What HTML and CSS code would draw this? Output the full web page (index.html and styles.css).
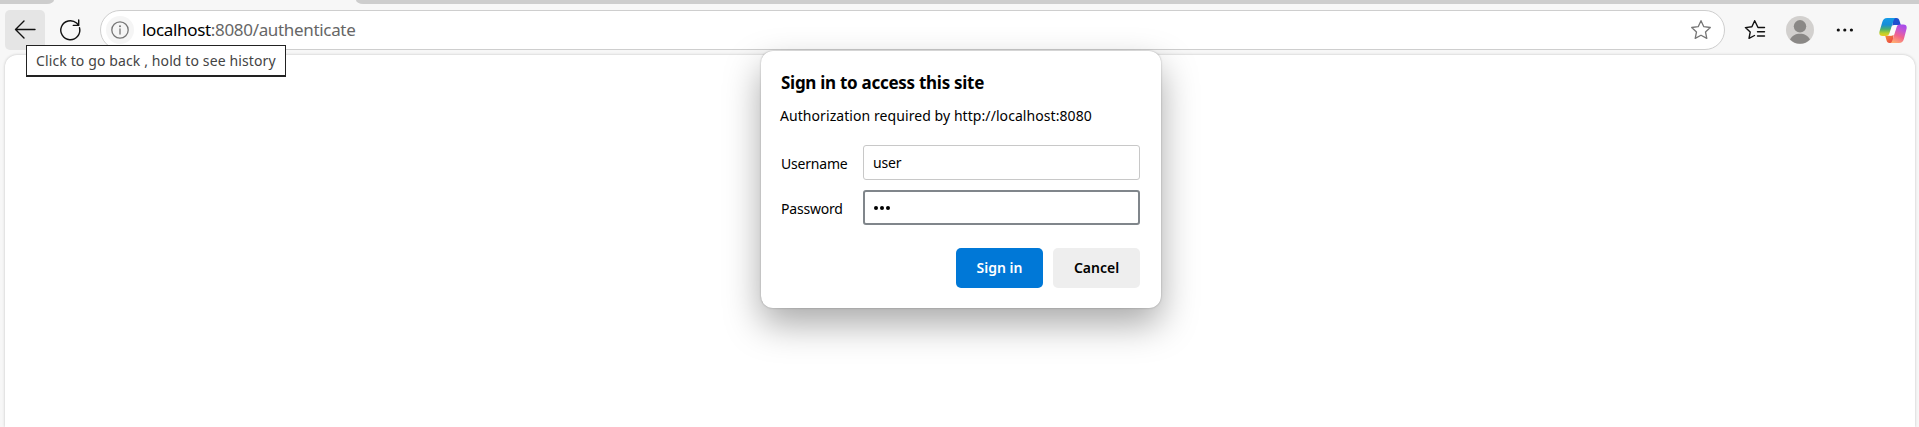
FILE: index.html
```html
<!DOCTYPE html>
<html lang="en">
<head>
<meta charset="utf-8">
<title>Sign in</title>
<link rel="stylesheet" href="styles.css">
</head>
<body>
<div class="browser">
  <div class="tabstrip"><span class="tabs-before"></span><span class="tabs-after"></span></div>
  <header class="toolbar">
    <button class="back" aria-label="Back"><svg width="40" height="40" viewBox="0 0 40 40"><path d="M30 19.5H10.5M19 11L10.5 19.5 19 28"/></svg></button>
    <button class="refresh" aria-label="Refresh"><svg width="24" height="24" viewBox="0 0 24 24"><path d="M21.5 9.8A9.5 9.5 0 1 1 18.6 5.1L20.7 7.3M20.7 2V7.4H15.3"/></svg></button>
    <div class="address">
      <span class="info"><svg width="28" height="28" viewBox="0 0 28 28"><circle cx="14" cy="14" r="8.2"/><path d="M14 13v5"/><circle class="dot" cx="14" cy="10.2" r="1"/></svg></span>
      <span class="url"><span class="host">localhost</span>:8080/authenticate</span>
      <svg class="star" width="22" height="22" viewBox="0 0 22 22"><path d="M11 1.7l2.8 6 6.5.8-4.8 4.5 1.3 6.4-5.8-3.2-5.8 3.2 1.3-6.4L1.7 8.5l6.5-.8z"/></svg>
    </div>
    <svg class="favorites" width="22" height="22" viewBox="0 0 22 22"><path d="M20.5 8.5H14L10.7 1.7 7.9 7.7 1.4 8.6 6.2 13.1 5 19.4 10.5 16.5M13.5 12.8H20.5M13.5 17H20.5"/></svg>
    <svg class="avatar" width="28" height="28" viewBox="0 0 28 28"><circle cx="14" cy="14" r="14" fill="#d2d0ce"/><circle cx="14" cy="10.3" r="6.2" fill="#8a8886"/><path d="M4 23.6C6 19.6 9.5 17.8 14 17.8s8 1.8 10 5.8A14 14 0 0 1 4 23.6z" fill="#8a8886"/></svg>
    <svg class="more" width="18" height="6" viewBox="0 0 18 6"><circle cx="2.3" cy="3" r="1.6"/><circle cx="8.8" cy="3" r="1.6"/><circle cx="15.4" cy="3" r="1.6"/></svg>
    <svg class="copilot" width="28" height="27" viewBox="0 0 28 27">
      <defs>
        <linearGradient id="cool" x1="0" y1="0" x2="0" y2="1"><stop offset="0" stop-color="#149be8"/><stop offset=".38" stop-color="#168dd8"/><stop offset=".62" stop-color="#47ae72"/><stop offset=".85" stop-color="#bcd02c"/><stop offset="1" stop-color="#e8cc25"/></linearGradient>
        <linearGradient id="warm" x1=".7" y1="0" x2=".3" y2="1"><stop offset="0" stop-color="#a84bea"/><stop offset=".3" stop-color="#c757cf"/><stop offset=".6" stop-color="#f2638c"/><stop offset="1" stop-color="#ffad72"/></linearGradient>
        <linearGradient id="ember" x1="0" y1="0" x2="1" y2="1"><stop offset="0" stop-color="#f5903c"/><stop offset="1" stop-color="#e73c43"/></linearGradient>
      </defs>
      <path d="M14 1h3.300c2.100 0 2.700 1 3.300 3l1.200 4h-3.900c-1.800 0-3.600-.5-4.600 1z" fill="#1e50cf"/>
      <path d="M13.700 26h-3.100c-2 0-2.500-1-3.100-2.800l-1.300-4.400h4c1.800 0 3.400.4 4.400-1z" fill="url(#ember)"/>
      <path d="M8.200 1H17c-1.500.3-2.100 1.400-2.600 3l-3.900 12c-.6 2-1.700 2.900-3.600 2.900H3.700C.7 18.900-.1 17 .5 14.400L3.300 5C4.100 2.300 5.500 1 8.200 1z" fill="url(#cool)"/>
      <path d="M20 26h-9c1.400-.3 2-1.400 2.500-3l4-12.500c.6-2 1.600-2.900 3.500-2.900h3.300c3 0 3.800 1.900 3.200 4.500L24.900 22C24.100 24.700 22.700 26 20 26z" fill="url(#warm)"/>
      <path d="M13.300 8.700Q14.500 8 17.800 8.200L14.800 17.600Q13.800 18.600 10 18.400 11 17.500 11.500 15z" fill="#fbfbfb"/>
    </svg>
  </header>
  <main class="page"></main>
  <div class="tooltip" role="tooltip"><span>Click to go back , hold to see history</span></div>
  <form class="dialog">
    <h1>Sign in to access this site</h1>
    <p>Authorization required by http://localhost:8080</p>
    <div class="field"><label for="user">Username</label><input id="user" type="text" value="user"></div>
    <div class="field"><label for="pass">Password</label><div id="pass" class="password"><i></i><i></i><i></i></div></div>
    <div class="actions"><button type="button" class="signin"><span>Sign in</span></button><button type="button" class="cancel"><span>Cancel</span></button></div>
  </form>
</div>
</body>
</html>
```
FILE: styles.css
```css
* { box-sizing: border-box; }
body { margin: 0; font-family: "Noto Sans", "Open Sans", sans-serif; color: #000; }
.browser { position: relative; display: flex; flex-direction: column; height: 427px; overflow: hidden; background: #f7f7f7; }
button { border: 0; padding: 0; font: inherit; background: none; }
svg { display: block; flex: none; fill: none; stroke: #111; stroke-width: 1.4; stroke-linecap: round; stroke-linejoin: round; }

.tabstrip { display: flex; justify-content: space-between; height: 4px; }
.tabs-before { width: 54px; background: #cdcdcd; border-bottom-right-radius: 7px 4px; }
.tabs-after { width: 1563px; background: #cdcdcd; border-bottom-left-radius: 7px 4px; }

.toolbar { display: flex; align-items: center; height: 51px; padding: 1px 12px 0 5px; }
.back { width: 40px; height: 40px; border-radius: 5px; background: #e5e5e5; }
.refresh { margin: 0 18px 0 13px; }
.address { display: flex; align-items: center; width: 1625px; height: 40px; padding: 0 12px 0 5px; border: 1px solid #cecece; border-radius: 20px; background: #fff; }
.info { width: 28px; border-radius: 50%; background: #f5f5f5; }
.info svg, .star { stroke: #767676; stroke-width: 1.3; }
.info .dot { fill: #767676; stroke: none; }
.url { flex: 1; margin-left: 8px; padding-bottom: 2px; font-size: 17px; letter-spacing: -0.33px; color: #666; white-space: nowrap; }
.host { color: #000; }
.favorites { margin-left: 19px; }
.avatar { margin-left: 20px; stroke: none; }
.more { margin-left: 22px; fill: #111; stroke: none; }
.copilot { margin-left: 25px; stroke: none; }

.page { flex: 1; margin: 0 4px 0 5px; border-radius: 12px 12px 0 0; background: #fff; box-shadow: 0 0 3px rgba(0,0,0,.22); }

.tooltip { position: absolute; left: 26px; top: 45px; width: 260px; height: 32px; padding-left: 9px; border: 1px solid #222; border-bottom-width: 2px; background: #fff; color: #444; font-size: 14px; line-height: 30px; letter-spacing: 0.12px; white-space: nowrap; }

.dialog { position: absolute; left: 761px; top: 51px; width: 400px; height: 257px; padding: 19px 20px 20px; border-radius: 12px; background: #fff; box-shadow: 0 0 2px rgba(0,0,0,.3), 0 16px 36px rgba(0,0,0,.34); font-size: 14px; }
.dialog h1 { margin: 0; height: 25px; font-size: 17px; line-height: 25px; letter-spacing: -0.28px; white-space: nowrap; }
.dialog p { margin: 11px 0 19px -1px; height: 20px; line-height: 20px; letter-spacing: 0.07px; white-space: nowrap; }
.field { display: flex; align-items: center; height: 35px; margin-bottom: 10px; }
.field label { width: 82px; padding-top: 2px; letter-spacing: -0.2px; }
.field input, .password { width: 277px; height: 35px; padding: 0 9px; border: 1px solid #c8c8c8; border-radius: 3px; background: #fff; font: inherit; letter-spacing: -0.2px; }
.password { display: flex; align-items: center; gap: 2px; border: 2px solid #80868b; }
.password i { width: 4px; height: 4px; border-radius: 50%; background: #000; }
.actions { display: flex; justify-content: flex-end; gap: 10px; margin: 23px 1px 0 0; }
.actions button { width: 87px; height: 40px; padding-bottom: 2px; border-radius: 5px; background: #eee; font-weight: 600; }
.actions .signin { background: #0078d7; color: #fff; }
```
